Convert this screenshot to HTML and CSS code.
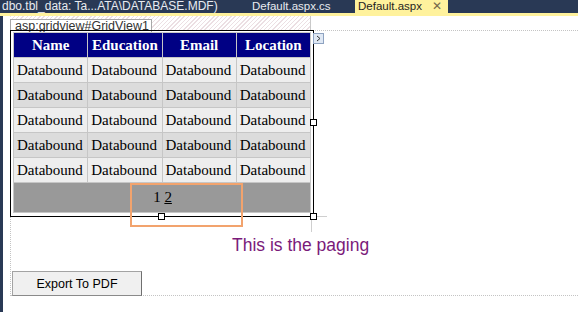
FILE: index.html
```html
<!DOCTYPE html>
<html lang="en">
<head>
    <meta charset="UTF-8">
    <title>Default.aspx - Design</title>
    <link rel="stylesheet" href="styles.css">
</head>
<body>
    <div class="tabs">
        <div class="tab tab-db">dbo.tbl_data: Ta...ATA\DATABASE.MDF)</div>
        <div class="tab tab-cs">Default.aspx.cs</div>
        <div class="tab active">Default.aspx <span class="close">✕</span></div>
    </div>
    <div class="tabline"></div>

    <div class="main">
        <div class="gutter"></div>
        <div class="surface">
            <div class="gv-tag"><span class="tag-label">asp:gridview#GridView1</span></div>

            <div class="form">
                <div class="gv-wrap">
                    <div class="gv">
                        <table>
                            <tr>
                                <th>Name</th>
                                <th>Education</th>
                                <th>Email</th>
                                <th>Location</th>
                            </tr>
                            <tr class="row"><td>Databound</td><td>Databound</td><td>Databound</td><td>Databound</td></tr>
                            <tr class="alt"><td>Databound</td><td>Databound</td><td>Databound</td><td>Databound</td></tr>
                            <tr class="row"><td>Databound</td><td>Databound</td><td>Databound</td><td>Databound</td></tr>
                            <tr class="alt"><td>Databound</td><td>Databound</td><td>Databound</td><td>Databound</td></tr>
                            <tr class="row"><td>Databound</td><td>Databound</td><td>Databound</td><td>Databound</td></tr>
                            <tr class="pager">
                                <td colspan="4">1 <a href="#">2</a></td>
                            </tr>
                        </table>
                    </div>

                    <!-- designer overlays -->
                    <span class="smart-tag">
                        <svg width="7" height="7" viewBox="0 0 7 7"><polyline points="2,1 5,3.5 2,6" fill="none" stroke="#333" stroke-width="1"/></svg>
                    </span>
                    <div class="selection"></div>
                    <span class="handle h-right"></span>
                    <span class="handle h-corner"></span>
                    <span class="handle h-bottom"></span>
                    <span class="guide guide-v"></span>
                    <span class="guide guide-h"></span>
                </div>

                <div class="caption">This is the paging</div>
                <button class="export">Export To PDF</button>
            </div>
        </div>
    </div>
</body>
</html>
```

FILE: styles.css
```css
* {
    margin: 0;
    padding: 0;
    box-sizing: border-box;
}
body {
    font-family: 'Liberation Sans', Arial, sans-serif;
    background: #fff;
    width: 578px;
    height: 312px;
    overflow: hidden;
}
.tabs {
    display: flex;
    height: 13px;
    background: #293955;
    color: #e8ebf0;
    font-size: 12px;
    line-height: 13px;
    white-space: nowrap;
}
.tab {
    overflow: hidden;
}
.tab-db {
    width: 250px;
    padding-left: 2px;
}
.tab-cs {
    width: 105px;
    padding-left: 2px;
    font-size: 11.5px;
}
.tab.active {
    width: 93px;
    padding-left: 3px;
    background: #fff29d;
    color: #1e1e1e;
    font-size: 11.5px;
}
.close {
    margin-left: 7px;
    color: #75694a;
    font-size: 12px;
}
.tabline {
    height: 3px;
    background: #fff29d;
}
.main {
    display: flex;
    height: 296px;
}
.gutter {
    width: 3px;
    background: #293955;
}
.surface {
    flex: 1;
    padding: 0 0 0 7px;
    overflow: hidden;
}
.gv-tag {
    width: 301px;
    height: 14px;
    background: repeating-linear-gradient(-45deg, #fff 0, #fff 2px, #ecdfe3 2px, #ecdfe3 3px);
    border-right: 1px solid #c9c9c9;
}
.tag-label {
    display: inline-block;
    height: 14px;
    padding: 0 2px 0 4px;
    background: #fff;
    border: 1px solid #a8a8a8;
    border-bottom: none;
    font-size: 12.5px;
    line-height: 13px;
    color: #333;
}
.form {
    width: 640px;
    border: 1px dotted #c4c4c4;
    border-right: none;
}
.gv-wrap {
    position: relative;
    display: inline-block;
    margin: -1px 0 0 -1px;
    vertical-align: top;
}
.gv {
    border: 1px solid #000;
    padding: 1px 2px 3px 2px;
}
table {
    width: 298px;
    table-layout: fixed;
    border-collapse: collapse;
    border: 1px solid #c6c6c6;
    font-family: 'Liberation Serif', 'Times New Roman', serif;
    font-size: 15px;
    color: #000;
}
th, td {
    height: 25px;
    border: 1px solid #c6c6c6;
    padding: 0 3px;
    white-space: nowrap;
    overflow: hidden;
}
th {
    background: #000084;
    color: #fff;
    font-weight: bold;
    text-align: center;
}
td {
    text-align: left;
}
.row td {
    background: #eeeeee;
}
.alt td {
    background: #dcdcdc;
}
.pager td {
    height: 30px;
    background: #999999;
    text-align: center;
    padding-right: 2px;
}
.pager a {
    color: #000;
    text-decoration: underline;
}
.smart-tag {
    position: absolute;
    left: 303px;
    top: 3px;
    width: 11px;
    height: 11px;
    background: #dfe8f4;
    border: 1px solid #8ea3c1;
    display: flex;
    align-items: center;
    justify-content: center;
}
.selection {
    position: absolute;
    left: 120px;
    top: 153px;
    width: 113px;
    height: 44px;
    border: 2px solid #f2a36d;
}
.handle {
    position: absolute;
    width: 7px;
    height: 7px;
    background: #fff;
    border: 1px solid #000;
}
.h-right {
    left: 300px;
    top: 89px;
}
.h-corner {
    left: 300px;
    top: 183px;
}
.h-bottom {
    left: 148px;
    top: 183px;
}
.guide {
    position: absolute;
    background: #cfcfcf;
}
.guide-v {
    left: 301px;
    top: 190px;
    width: 1px;
    height: 12px;
}
.guide-h {
    left: 307px;
    top: 186px;
    width: 10px;
    height: 1px;
}
.caption {
    margin-top: 18px;
    padding-left: 221px;
    font-size: 17.5px;
    line-height: 20px;
    color: #7a1a7a;
}
.export {
    display: block;
    width: 130px;
    height: 25px;
    margin: 16px 0 -1px 1px;
    background: #f0f0f0;
    border: 1px solid #a3a3a3;
    border-right-color: #6f6f6f;
    border-bottom-color: #8a8a8a;
    font-family: 'Liberation Sans', Arial, sans-serif;
    font-size: 12.5px;
    color: #000;
}
```
